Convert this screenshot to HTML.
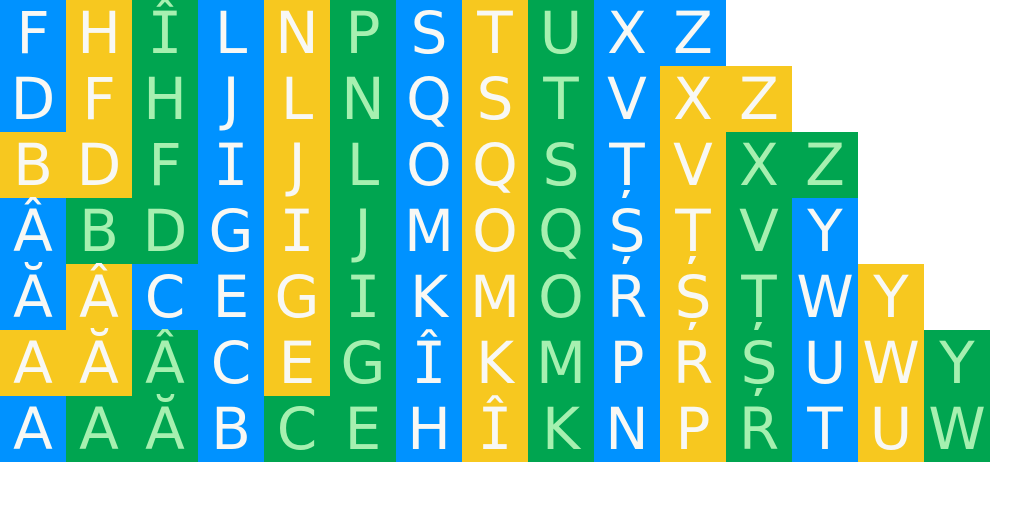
<!DOCTYPE html>
<html><head><meta charset="utf-8"><style>
body{margin:0;width:1024px;height:512px;background:#fff;overflow:hidden}
.r{display:flex;height:66px}
.c{width:66px;height:66px;display:flex;align-items:center;justify-content:center;font-family:"DejaVu Sans","Liberation Sans",sans-serif;font-size:58px;color:#f8f8f4;line-height:1}
.m{font-family:"DejaVu Sans Mono",monospace}
.b{background:#0092ff}.y{background:#f7c81f}.g{background:#00a550;color:#a6f0b0}
</style></head><body>
<div class="r"><div class="c b">F</div><div class="c y">H</div><div class="c g m">Î</div><div class="c b">L</div><div class="c y">N</div><div class="c g">P</div><div class="c b">S</div><div class="c y">T</div><div class="c g">U</div><div class="c b">X</div><div class="c b">Z</div></div>
<div class="r"><div class="c b">D</div><div class="c y">F</div><div class="c g">H</div><div class="c b">J</div><div class="c y">L</div><div class="c g">N</div><div class="c b">Q</div><div class="c y">S</div><div class="c g">T</div><div class="c b">V</div><div class="c y">X</div><div class="c y">Z</div></div>
<div class="r"><div class="c y">B</div><div class="c y">D</div><div class="c g">F</div><div class="c b m">I</div><div class="c y">J</div><div class="c g">L</div><div class="c b">O</div><div class="c y">Q</div><div class="c g">S</div><div class="c b">Ț</div><div class="c y">V</div><div class="c g">X</div><div class="c g">Z</div></div>
<div class="r"><div class="c b">Â</div><div class="c g">B</div><div class="c g">D</div><div class="c b">G</div><div class="c y m">I</div><div class="c g">J</div><div class="c b">M</div><div class="c y">O</div><div class="c g">Q</div><div class="c b">Ș</div><div class="c y">Ț</div><div class="c g">V</div><div class="c b">Y</div></div>
<div class="r"><div class="c b">Ă</div><div class="c y">Â</div><div class="c b">C</div><div class="c b">E</div><div class="c y">G</div><div class="c g m">I</div><div class="c b">K</div><div class="c y">M</div><div class="c g">O</div><div class="c b">R</div><div class="c y">Ș</div><div class="c g">Ț</div><div class="c b">W</div><div class="c y">Y</div></div>
<div class="r"><div class="c y">A</div><div class="c y">Ă</div><div class="c g">Â</div><div class="c b">C</div><div class="c y">E</div><div class="c g">G</div><div class="c b m">Î</div><div class="c y">K</div><div class="c g">M</div><div class="c b">P</div><div class="c y">R</div><div class="c g">Ș</div><div class="c b">U</div><div class="c y">W</div><div class="c g">Y</div></div>
<div class="r"><div class="c b">A</div><div class="c g">A</div><div class="c g">Ă</div><div class="c b">B</div><div class="c g">C</div><div class="c g">E</div><div class="c b">H</div><div class="c y m">Î</div><div class="c g">K</div><div class="c b">N</div><div class="c y">P</div><div class="c g">R</div><div class="c b">T</div><div class="c y">U</div><div class="c g">W</div></div>
</body></html>
